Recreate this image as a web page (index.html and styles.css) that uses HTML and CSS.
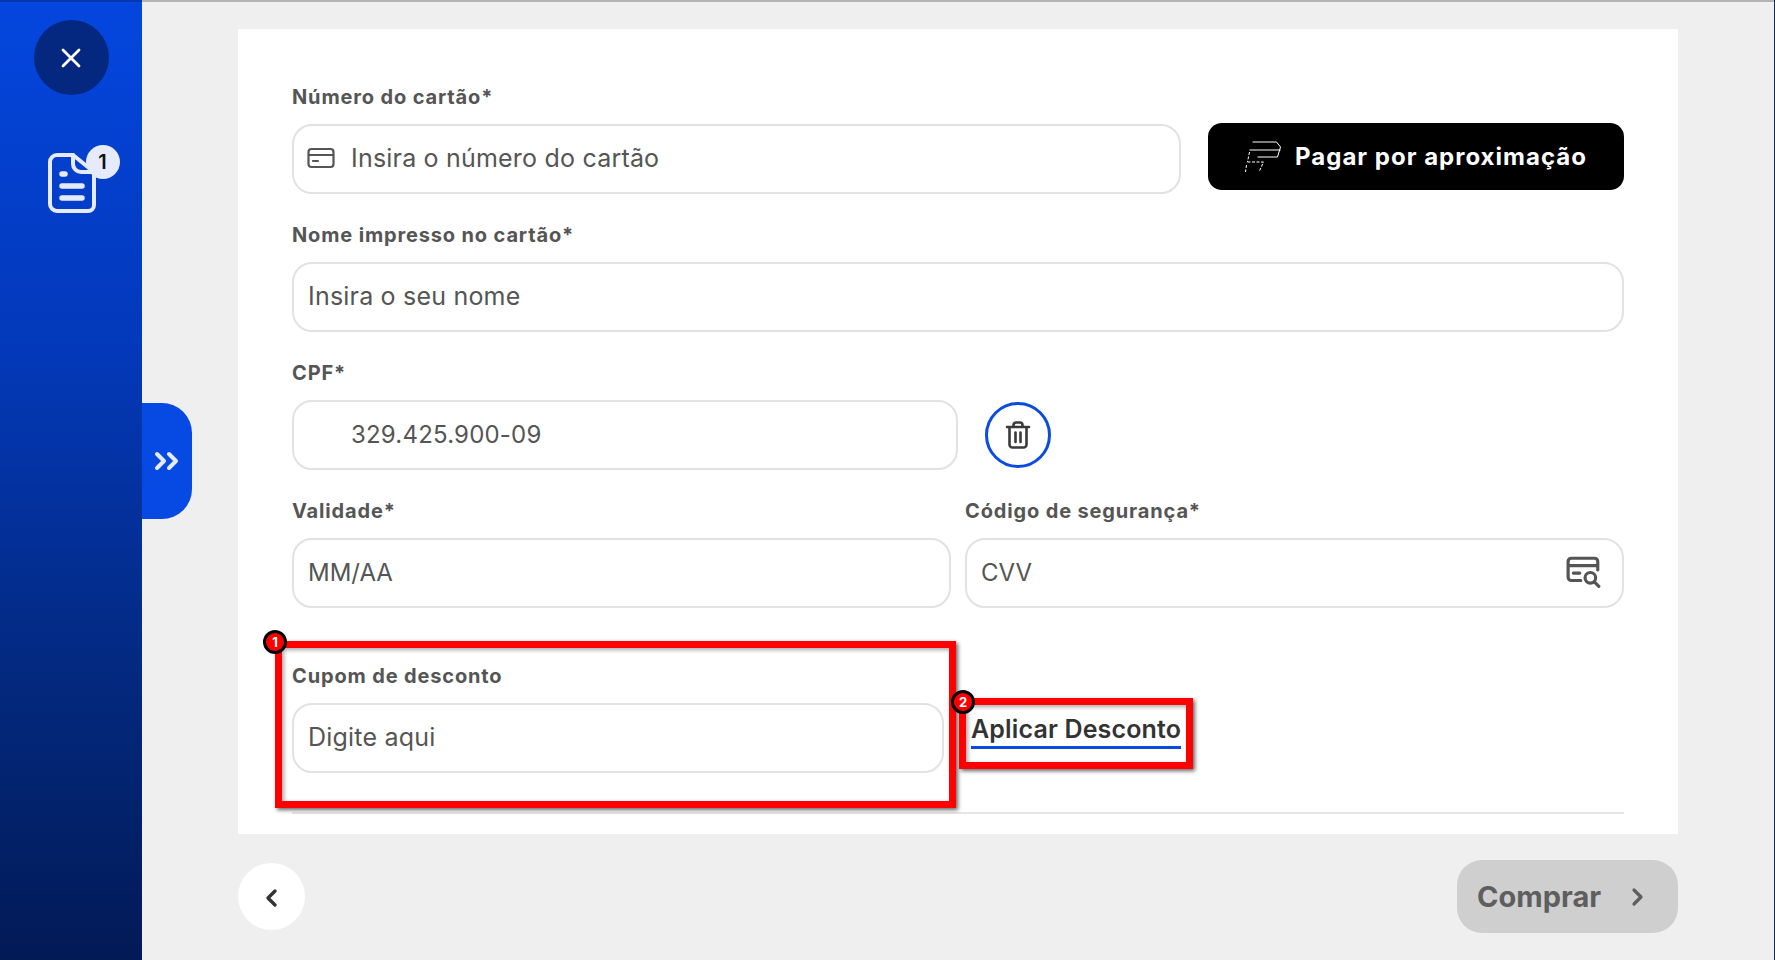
FILE: index.html
```html
<!DOCTYPE html>
<html lang="pt-BR">
<head>
<meta charset="utf-8">
<title>Pagamento</title>
<link rel="stylesheet" href="styles.css">
</head>
<body>
<div class="app">
  <aside class="sidebar">
    <button class="close-btn">
      <svg width="22" height="22" viewBox="0 0 22 22"><path d="M3 3l16 16M19 3L3 19" stroke="#fff" stroke-width="2.8" stroke-linecap="round"/></svg>
    </button>
    <div class="doc">
      <svg width="48" height="60" viewBox="0 0 48 60" fill="none" stroke="#e6ebfb" stroke-width="4" stroke-linecap="round" stroke-linejoin="round">
        <path d="M25 2H9a7 7 0 0 0-7 7v42a7 7 0 0 0 7 7h31a6 6 0 0 0 6-6V19"/>
        <path d="M25 2v9a8 8 0 0 0 8 8h13z"/>
        <path d="M14 21h3M14 33h20M14 45h20" stroke-width="5.5"/>
      </svg>
      <span class="doc-badge">1</span>
    </div>
    <button class="side-tab">
      <svg width="26" height="20" viewBox="0 0 26 20" fill="none" stroke="#e6ebfb" stroke-width="4" stroke-linecap="round" stroke-linejoin="round"><path d="M3 3l7 7-7 7M15 3l7 7-7 7"/></svg>
    </button>
  </aside>
  <main class="main">
    <section class="card">
      <div class="row row-card">
        <div class="field grow">
          <div class="label">Número do cartão*</div>
          <div class="input with-icon">
            <svg class="card-icon" width="28" height="22" viewBox="0 0 28 22" fill="none" stroke="#555" stroke-width="2.2" stroke-linecap="round"><rect x="1.5" y="2" width="25" height="18" rx="3"/><path d="M2 8h24M6 14h5"/></svg>
            <span>Insira o número do cartão</span>
          </div>
        </div>
        <button class="nfc-btn">
          <svg width="37" height="32" viewBox="0 0 36 32" fill="none" stroke="#fff" stroke-width="1"><path d="M7 1h24l4 5-3 10H12"/><path d="M4 9h31" /><path d="M4 11l-2 10M2 21h16l-4 9M1 24l-1 7" stroke-dasharray="3 1.5"/></svg>
          <span>Pagar por aproximação</span>
        </button>
      </div>
      <div class="field">
        <div class="label">Nome impresso no cartão*</div>
        <div class="input">Insira o seu nome</div>
      </div>
      <div class="row row-cpf">
        <div class="field cpf">
          <div class="label">CPF*</div>
          <div class="input indent">329.425.900-09</div>
        </div>
        <button class="trash">
          <svg width="26" height="28" viewBox="0 0 26 28" fill="none" stroke="#3a3a3a" stroke-width="2.6" stroke-linecap="round" stroke-linejoin="round"><path d="M2 6h22M8.500 6V4a2.500 2.500 0 0 1 2.500-2.500h4A2.500 2.500 0 0 1 17.500 4v2M4.500 6v17.500a3 3 0 0 0 3 3h11a3 3 0 0 0 3-3V6M10.500 11.500v9.500M15.500 11.500v9.500"/></svg>
        </button>
      </div>
      <div class="row row-two">
        <div class="field">
          <div class="label">Validade*</div>
          <div class="input caps">MM/AA</div>
        </div>
        <div class="field">
          <div class="label">Código de segurança*</div>
          <div class="input caps between">
            <span>CVV</span>
            <svg width="36" height="32" viewBox="0 0 34 30" fill="none" stroke="#555" stroke-width="3" stroke-linecap="round"><path d="M14 23H5a3 3 0 0 1-3-3V5a3 3 0 0 1 3-3h22a3 3 0 0 1 3 3v8M2 9h28M7 16h6"/><circle cx="23" cy="20.500" r="5"/><path d="M27 24.500l4 4"/></svg>
          </div>
        </div>
      </div>
      <div class="row row-coupon">
        <div class="field coupon">
          <div class="label">Cupom de desconto</div>
          <div class="input">Digite aqui</div>
        </div>
        <a class="apply" href="#">Aplicar Desconto</a>
      </div>
      <hr class="divider">
    </section>
    <footer class="footer">
      <button class="back">
        <svg class="back-icon" width="14" height="20" viewBox="0 0 14 20" fill="none" stroke="#333" stroke-width="3.4" stroke-linecap="round" stroke-linejoin="round"><path d="M11 3l-7 7 7 7"/></svg>
      </button>
      <button class="buy">
        <span>Comprar</span>
        <svg width="14" height="20" viewBox="0 0 14 20" fill="none" stroke="#5e5e5e" stroke-width="3.2" stroke-linecap="round" stroke-linejoin="round"><path d="M3 3l7 7-7 7"/></svg>
      </button>
    </footer>
  </main>
</div>
<div class="mark mark-one"><span class="pin">1</span></div>
<div class="mark mark-two"><span class="pin">2</span></div>
</body>
</html>
```
FILE: styles.css
```css
* { box-sizing: border-box; }
html, body { margin: 0; height: 100%; }
body {
  background: #efefef;
  font-family: Inter, "Liberation Sans", sans-serif;
  color: #555;
  overflow: hidden;
  border-right: 1px solid #1c2a4a;
}
button { border: 0; padding: 0; font: inherit; background: none; }
.app { display: flex; height: 960px; }

.sidebar {
  position: relative;
  width: 142px;
  flex: none;
  display: flex;
  flex-direction: column;
  align-items: center;
  border-top: 2px solid #0436ad;
  background: linear-gradient(180deg, #0446de 0%, #0339bb 35%, #03297f 70%, #021a56 100%);
}
.close-btn {
  width: 75px;
  height: 75px;
  margin-top: 18px;
  border-radius: 50%;
  background: #04287f;
  display: flex;
  align-items: center;
  justify-content: center;
}
.doc { position: relative; width: 48px; height: 60px; margin: 58px 0 0 1px; }
.doc svg { display: block; }
.doc-badge {
  position: absolute;
  top: -8px;
  left: 38px;
  width: 34px;
  height: 34px;
  border-radius: 50%;
  background: #e6ebfb;
  color: #111;
  font-size: 20px;
  font-weight: 600;
  line-height: 34px;
  text-align: center;
}
.side-tab {
  position: absolute;
  left: 142px;
  top: 401px;
  width: 50px;
  height: 116px;
  border-radius: 0 30px 30px 0;
  background: #0749e3;
  display: flex;
  align-items: center;
  justify-content: center;
}

.main { flex: 1; padding: 27px 96px 0; border-top: 2px solid #b4b4b4; }
.card {
  background: #fff;
  height: 805px;
  padding: 57px 54px 0;
}
.field { display: block; margin-bottom: 30px; min-width: 0; }
.grow { flex: 1; }
.label {
  height: 22px;
  line-height: 22px;
  margin-bottom: 16px;
  font-size: 20px;
  font-weight: 700;
  letter-spacing: .85px;
  color: #555;
  white-space: nowrap;
}
.input {
  height: 70px;
  border: 2px solid #e2e2e2;
  border-radius: 20px;
  padding: 0 14px 2px;
  display: flex;
  align-items: center;
  font-size: 25px;
  letter-spacing: .2px;
  color: #555;
  background: #fff;
  white-space: nowrap;
}
.with-icon { padding-left: 13px; }
.card-icon { margin-right: 16px; flex: none; }
.indent { padding-left: 57px; font-size: 24px; }
.caps { font-size: 24px; letter-spacing: 0; }
.between { justify-content: space-between; padding-right: 20px; }

.row { display: flex; }
.row-card { gap: 27px; align-items: flex-start; }
.nfc-btn {
  width: 416px;
  height: 67px;
  flex: none;
  margin-top: 37px;
  border-radius: 14px;
  background: #000;
  color: #fff;
  font-size: 24px;
  font-weight: 700;
  letter-spacing: 1px;
  display: flex;
  align-items: center;
  justify-content: center;
  gap: 13px;
}
.row-cpf { gap: 27px; align-items: flex-start; }
.cpf { width: 666px; }
.trash {
  width: 66px;
  height: 66px;
  margin-top: 40px;
  border: 3px solid #0b4be0;
  border-radius: 50%;
  display: flex;
  align-items: center;
  justify-content: center;
}
.row-two { gap: 14px; }
.row-two .field { flex: 1; margin-bottom: 0; }
.row-coupon { margin-top: 57px; gap: 27px; align-items: flex-start; }
.coupon { width: 652px; margin-bottom: 0; }
.apply {
  margin-top: 50px;
  height: 34px;
  line-height: 28px;
  border-bottom: 3px solid #0b4be0;
  color: #333;
  font-size: 25px;
  font-weight: 600;
  letter-spacing: .15px;
  text-decoration: none;
  white-space: nowrap;
}
.divider { margin: 39px 0 0; border: 0; border-top: 2px solid #e6e6e6; }

.footer {
  margin-top: 26px;
  display: flex;
  align-items: center;
  justify-content: space-between;
}
.back {
  width: 67px;
  height: 67px;
  border-radius: 50%;
  background: #fff;
  display: flex;
  align-items: center;
  justify-content: center;
  padding: 2px 2px 0 0;
}
.buy {
  width: 221px;
  height: 73px;
  border-radius: 25px;
  background: #cfcfcf;
  color: #5e5e5e;
  font-size: 29px;
  font-weight: 700;
  display: flex;
  align-items: center;
  justify-content: space-between;
  padding: 0 33px 0 20px;
}

.mark {
  position: absolute;
  border: 7px solid #f00;
  box-shadow: 2px 2px 4px rgba(0,0,0,.6), inset 2px 2px 4px rgba(0,0,0,.35);
}
.mark-one { left: 275px; top: 641px; width: 681px; height: 167px; }
.mark-two { left: 959px; top: 698px; width: 234px; height: 71px; }
.pin {
  position: absolute;
  left: -19px;
  top: -18px;
  width: 24px;
  height: 24px;
  border: 3px solid #000;
  border-radius: 50%;
  background: #f00;
  color: #fff;
  font-size: 13px;
  font-weight: 700;
  line-height: 18px;
  text-align: center;
}
.mark-two .pin { left: -15px; top: -15px; }
```
